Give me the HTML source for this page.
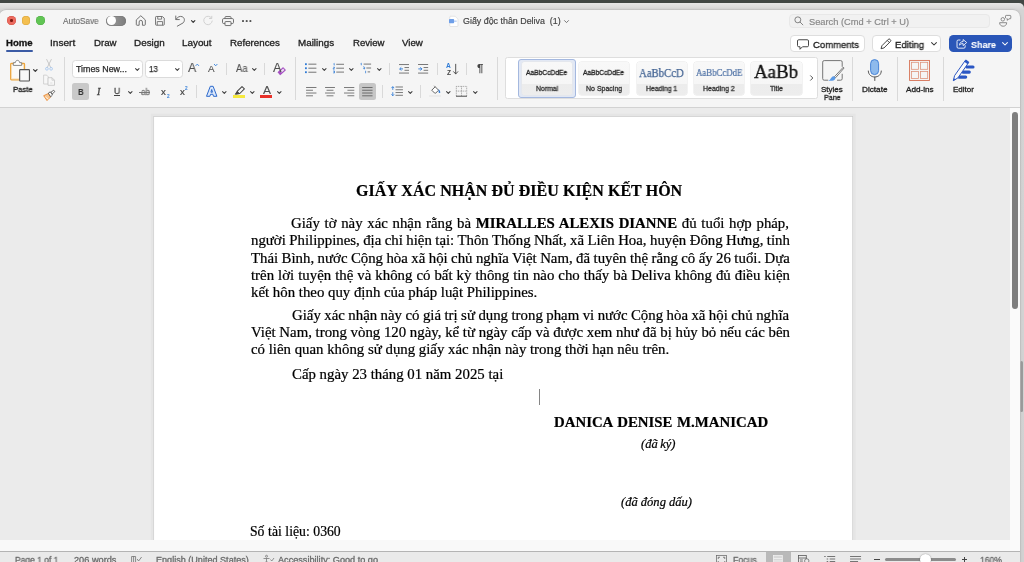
<!DOCTYPE html>
<html lang="vi"><head><meta charset="utf-8"><title>Giấy độc thân Deliva (1)</title>
<style>
html,body{margin:0;padding:0}
html{width:1024px;height:562px;overflow:hidden}
body{width:1024px;height:562px;position:relative;overflow:hidden;background:#d6d6d6;font-family:"Liberation Sans",sans-serif}
.t{position:absolute;white-space:nowrap;display:block;transform-origin:0 50%;will-change:transform}
.a{position:absolute;display:block}
svg{position:absolute;overflow:visible}
.sep{position:absolute;width:1px;background:#d9d9d9}
.chev{fill:none;stroke:#3a3a3a;stroke-width:1.3;stroke-linecap:round;stroke-linejoin:round}
.tile{border-radius:2.500px;background:linear-gradient(#f8f8f8 0,#f6f6f6 66%,#ececec 67%,#ededed 100%);box-shadow:0 0 0 .5px #e6e6e6}

</style></head><body>
<!-- desktop + window behind -->
<div class="a" style="left:0;top:0;width:1024px;height:8px;background:#414744"></div>
<div class="a" style="left:0;top:3.400px;width:1024px;height:559px;background:linear-gradient(#e6e6e6 0,#dcdcdc 4px,#d4d4d4 7px,#d2d2d2 100%);border-radius:0 5px 0 0;"></div>
<div class="a" style="left:1020.300px;top:361px;width:3px;height:51px;background:#9c9c9c;border-radius:1.500px"></div>
<!-- main window -->
<div class="a" id="win" style="left:-1px;top:9.500px;width:1020.500px;height:553px;background:#f5f5f5;border-radius:7px 7px 0 0;box-shadow:0 0 0 .6px #bdbdbd,0 0 3px rgba(0,0,0,.12)">
</div>
<!-- doc area -->
<div class="a" style="left:0;top:107px;width:1020px;height:1px;background:#d2d2d2"></div>
<div class="a" style="left:0;top:108px;width:1010px;height:433px;background:#ebebeb"></div>
<div class="a" style="left:1010px;top:108px;width:10px;height:443px;background:#fafafa"></div>
<div class="a" style="left:1011.800px;top:112.300px;width:5.800px;height:196.500px;background:#7f7f7f;border-radius:3px"></div>
<div class="a" style="left:0;top:551px;width:1020px;height:1px;background:#b4b4b4"></div>
<div class="a" style="left:0;top:552px;width:1020px;height:10px;background:#eaeaea"></div>
<!-- page -->
<svg style="left:0;top:0" width="1024" height="562" viewBox="0 0 1024 562"><rect x="152.200" y="115.100" width="702" height="427" fill="none" stroke="#000" stroke-opacity=".025" stroke-width="3"/><rect x="153.700" y="116.600" width="699" height="424" fill="#fff" stroke="#cbcbcb" stroke-width=".7"/></svg>
<div class="a" style="left:0;top:540px;width:1010px;height:11px;background:#f9f9f9"></div>
<div class="a" style="left:539.100px;top:388.600px;width:1.300px;height:16.600px;background:#858585"></div>
<!-- traffic lights -->
<div class="a" style="left:7.1px;top:16.2px;width:8.8px;height:8.8px;border-radius:50%;background:#ec6a5e;box-shadow:inset 0 0 0 .5px #d35246"></div>
<div class="a" style="left:10.3px;top:19.4px;width:2.4px;height:2.4px;border-radius:50%;background:#7d1a12"></div>
<div class="a" style="left:21.5px;top:16.2px;width:8.8px;height:8.8px;border-radius:50%;background:#f4bf4f;box-shadow:inset 0 0 0 .5px #d9a43b"></div>
<div class="a" style="left:35.9px;top:16.2px;width:8.8px;height:8.8px;border-radius:50%;background:#61c554;box-shadow:inset 0 0 0 .5px #4eab42"></div>
<!-- autosave toggle -->
<div class="a" style="left:105.900px;top:15.600px;width:20.400px;height:10.500px;border-radius:5.300px;background:linear-gradient(90deg,#a2a2a2,#7c7c7c);box-shadow:inset 0 0 0 .6px #777"></div>
<div class="a" style="left:106.700px;top:16.400px;width:8.900px;height:8.900px;border-radius:50%;background:#fff"></div>
<!-- home icon -->
<svg style="left:134.800px;top:14.600px" width="11.600" height="11" viewBox="0 0 23 22"><path d="M2.500 9.800 L11.500 1.500 L20.500 9.800 V19 A1.500 1.500 0 0 1 19 20.500 H14.800 V14 A3.300 3.300 0 0 0 8.200 14 V20.500 H4 A1.500 1.500 0 0 1 2.500 19 Z" fill="none" stroke="#6c6c6c" stroke-width="1.900" stroke-linejoin="round"/></svg>
<!-- save icon -->
<svg style="left:155px;top:15.900px" width="9.800" height="9.700" viewBox="0 0 20 20"><path d="M2.500 1 H15 L19 4.500 V17.500 A1.500 1.500 0 0 1 17.500 19 H2.500 A1.500 1.500 0 0 1 1 17.500 V2.500 A1.500 1.500 0 0 1 2.500 1 Z" fill="none" stroke="#6c6c6c" stroke-width="1.900" stroke-linejoin="round"/><path d="M5.500 1.500 V6.500 H13.500 V1.500" fill="none" stroke="#6c6c6c" stroke-width="1.800"/><path d="M4.500 19 V11.500 H15.500 V19" fill="none" stroke="#6c6c6c" stroke-width="1.800"/></svg>
<!-- undo -->
<svg style="left:174.700px;top:14.700px" width="10.200" height="11.700" viewBox="0 0 20 23"><path d="M1.500 2 V9 H8.500" fill="none" stroke="#6c6c6c" stroke-width="1.900" stroke-linecap="round" stroke-linejoin="round"/><path d="M2 8.500 C5 3.500 10 1.500 14.500 3.500 C19.500 6 19.500 12 16 15.500 L4.500 22" fill="none" stroke="#6c6c6c" stroke-width="1.900" stroke-linecap="round"/></svg>
<svg style="left:191.3px;top:19.8px" width="4.4" height="3" viewBox="0 0 8 5"><path class="chev" d="M1 1 L4 4 L7 1" style="stroke-width:2.2"/></svg>
<!-- redo (disabled) -->
<svg style="left:203.2px;top:15.800px" width="10" height="10" viewBox="0 0 20 20"><path d="M17 4 A8.5 8.5 0 1 0 18.5 10" fill="none" stroke="#d2d2d2" stroke-width="2" stroke-linecap="round"/><path d="M17.5 0.5 V5 H13" fill="none" stroke="#cfcfcf" stroke-width="2" stroke-linecap="round" stroke-linejoin="round"/></svg>
<!-- print -->
<svg style="left:221.600px;top:15.500px" width="12" height="10.100" viewBox="0 0 24 20"><path d="M6 5 V2.500 A1.500 1.500 0 0 1 7.500 1 H16.500 A1.500 1.500 0 0 1 18 2.500 V5" fill="none" stroke="#6c6c6c" stroke-width="1.900"/><rect x="1" y="5" width="22" height="10" rx="2.500" fill="none" stroke="#6c6c6c" stroke-width="1.900"/><rect x="6" y="11" width="12" height="8" rx="1" fill="#f5f5f5" stroke="#6c6c6c" stroke-width="1.900"/></svg>
<!-- dots -->
<div class="a" style="left:242.4px;top:20.1px;width:1.7px;height:1.7px;border-radius:50%;background:#555;box-shadow:3.7px 0 0 #555,7.4px 0 0 #555"></div>
<!-- doc icon -->
<svg style="left:448.9px;top:15.5px" width="9.2" height="10.8" viewBox="0 0 18 21"><path d="M3 0.500 H12 L17.5 6 V19 A1.5 1.5 0 0 1 16 20.500 H3 A1.5 1.500 0 0 1 1.500 19 V2 A1.5 1.5 0 0 1 3 0.500 Z" fill="#fff" stroke="#d0d0d0" stroke-width="1"/><rect x="0" y="6" width="10" height="8" rx="1.5" fill="#6f9fe8"/><rect x="10" y="9" width="5" height="2" fill="#9bbcf0"/></svg>
<svg style="left:563.7px;top:19.6px" width="5" height="3.200" viewBox="0 0 10 6"><path class="chev" d="M1 1 L5 5 L9 1" style="stroke:#666;stroke-width:1.8"/></svg>
<!-- search box -->
<div class="a" style="left:789px;top:13.9px;width:200.7px;height:14.3px;box-sizing:border-box;border:1px solid #e8e8e8;border-radius:4px;background:#f1f1f1"></div>
<svg style="left:793.6px;top:16.2px" width="9.6" height="9.6" viewBox="0 0 20 20"><circle cx="8" cy="8" r="6.2" fill="none" stroke="#7d7d7d" stroke-width="2"/><path d="M12.700 12.700 L18.500 18.500" stroke="#7d7d7d" stroke-width="2" stroke-linecap="round"/></svg>
<!-- tab underline -->
<div class="a" style="left:6px;top:50px;width:26.7px;height:2.3px;border-radius:1.2px;background:#3b5ba5"></div>
<!-- comments / editing / share -->
<div class="a" style="left:790.2px;top:35.300px;width:74.9px;height:16.400px;box-sizing:border-box;border:1px solid #dedede;border-radius:4px;background:#fff"></div>
<svg style="left:796.900px;top:38.800px" width="12" height="11" viewBox="0 0 24 21"><path d="M3.500 1 H20.500 A2.500 2.500 0 0 1 23 3.500 V12.500 A2.500 2.500 0 0 1 20.500 15 H11 L6 20 V15 H3.500 A2.500 2.500 0 0 1 1 12.500 V3.500 A2.500 2.500 0 0 1 3.500 1 Z" fill="none" stroke="#333" stroke-width="1.800" stroke-linejoin="round"/></svg>
<div class="a" style="left:872.4px;top:35.300px;width:69.1px;height:16.400px;box-sizing:border-box;border:1px solid #dedede;border-radius:4px;background:#fff"></div>
<svg style="left:879.800px;top:38px" width="11.800" height="11.800" viewBox="0 0 22 22"><path d="M2 20 L3.500 14.500 L15.500 2.500 A2.200 2.200 0 0 1 18.600 2.500 L19.500 3.400 A2.200 2.200 0 0 1 19.500 6.500 L7.500 18.500 Z" fill="none" stroke="#333" stroke-width="1.700" stroke-linejoin="round"/><path d="M13.500 4.500 L17.500 8.500" stroke="#333" stroke-width="1.700"/></svg>
<svg style="left:930.8px;top:42px" width="6" height="3.600" viewBox="0 0 10 6"><path class="chev" d="M1 1 L5 5 L9 1" style="stroke:#333;stroke-width:1.700"/></svg>
<div class="a" style="left:948.7px;top:35px;width:63.600px;height:17px;border-radius:4.500px;background:#2a56b8"></div>
<svg style="left:955.8px;top:38.400px" width="11.200" height="11.200" viewBox="0 0 22 22"><path d="M8 4 H4.500 A2.500 2.500 0 0 0 2 6.500 V17.500 A2.500 2.500 0 0 0 4.500 20 H15.500 A2.500 2.500 0 0 0 18 17.500 V15" fill="none" stroke="#fff" stroke-width="1.700" stroke-linecap="round"/><path d="M7 14 C7 9.500 10 7 14 7 V3 L21 9 L14 15 V11 C11 11 9 11.500 7 14 Z" fill="none" stroke="#fff" stroke-width="1.700" stroke-linejoin="round"/></svg>
<svg style="left:1001.6px;top:42px" width="6" height="3.600" viewBox="0 0 10 6"><path class="chev" d="M1 1 L5 5 L9 1" style="stroke:#fff;stroke-width:1.700"/></svg>
<!-- ===== ribbon ===== -->
<svg style="left:33.200px;top:68.600px" width="4.600" height="3" viewBox="0 0 8 5"><path class="chev" d="M1 1 L4 4 L7 1" style="stroke-width:2.200"/></svg>
<div class="sep" style="left:64px;top:57px;height:43.500px"></div>
<!-- font boxes -->
<div class="a" style="left:72px;top:60px;width:70.500px;height:18px;box-sizing:border-box;border:1px solid #dbdbdb;border-radius:3.500px;background:#fff"></div>
<svg style="left:135.200px;top:67.600px" width="4.600" height="3" viewBox="0 0 8 5"><path class="chev" d="M1 1 L4 4 L7 1" style="stroke-width:1.750"/></svg>
<div class="a" style="left:144.500px;top:60px;width:38.200px;height:18px;box-sizing:border-box;border:1px solid #dbdbdb;border-radius:3.500px;background:#fff"></div>
<svg style="left:175.200px;top:67.600px" width="4.600" height="3" viewBox="0 0 8 5"><path class="chev" d="M1 1 L4 4 L7 1" style="stroke-width:1.750"/></svg>
<div class="sep" style="left:226px;top:62.500px;height:12.700px"></div>
<svg style="left:252.200px;top:67.600px" width="4.600" height="3" viewBox="0 0 8 5"><path class="chev" d="M1 1 L4 4 L7 1" style="stroke-width:1.750"/></svg>
<div class="sep" style="left:264px;top:62.500px;height:12.700px"></div>
<div class="sep" style="left:295px;top:57.400px;height:43px"></div>
<!-- B selected -->
<div class="a" style="left:72px;top:83.100px;width:16.800px;height:17.100px;border-radius:2.500px;background:#c9c9c9;z-index:0"></div>
<!-- U underline + chevron -->
<div class="a" style="left:114px;top:95.300px;width:6.200px;height:.9px;background:#444"></div>
<svg style="left:128.300px;top:90.500px" width="4.600" height="3" viewBox="0 0 8 5"><path class="chev" d="M1 1 L4 4 L7 1" style="stroke-width:1.750"/></svg>
<!-- strikethrough -->
<div class="a" style="left:139.300px;top:91.600px;width:11.200px;height:.9px;background:#7a7a7a"></div>
<div class="sep" style="left:196.200px;top:85.400px;height:12.400px"></div>
<svg style="left:222.300px;top:90.500px" width="4.600" height="3" viewBox="0 0 8 5"><path class="chev" d="M1 1 L4 4 L7 1" style="stroke-width:1.750"/></svg>
<div class="a" style="left:233px;top:95px;width:12px;height:3px;background:#f6e93e"></div>
<svg style="left:249.700px;top:90.500px" width="4.600" height="3" viewBox="0 0 8 5"><path class="chev" d="M1 1 L4 4 L7 1" style="stroke-width:1.750"/></svg>
<!-- font colour bar -->
<div class="a" style="left:260.300px;top:95px;width:11.800px;height:3px;background:#e8312a"></div>
<svg style="left:277px;top:90.500px" width="4.600" height="3" viewBox="0 0 8 5"><path class="chev" d="M1 1 L4 4 L7 1" style="stroke-width:1.750"/></svg>
<!-- bullets -->
<svg style="left:305.300px;top:63.300px" width="11.400" height="10.400" viewBox="0 0 22 20"><g fill="#2f7bd6"><rect x="0" y="0.500" width="3.500" height="3.500"/><rect x="0" y="8.300" width="3.500" height="3.500"/><rect x="0" y="16" width="3.500" height="3.500"/></g><g stroke="#6a6a6a" stroke-width="1.800"><path d="M6.500 2.200 H22 M6.500 10 H22 M6.500 17.800 H22"/></g></svg>
<svg style="left:322px;top:67.600px" width="4.600" height="3" viewBox="0 0 8 5"><path class="chev" d="M1 1 L4 4 L7 1" style="stroke-width:1.750"/></svg>
<!-- numbering -->
<svg style="left:332.900px;top:63.300px" width="11" height="10.400" viewBox="0 0 22 20"><g stroke="#2f7bd6" stroke-width="1.500" fill="none"><path d="M1 1.500 L2.500 0.500 V4.500 M0.500 8 H3 V10 H0.500 V12 H3 M0.500 15.500 H3 V19.500 H0.500 M1 17.500 H3"/></g><g stroke="#6a6a6a" stroke-width="1.800"><path d="M6.500 2.200 H22 M6.500 10 H22 M6.500 17.800 H22"/></g></svg>
<svg style="left:349.300px;top:67.600px" width="4.600" height="3" viewBox="0 0 8 5"><path class="chev" d="M1 1 L4 4 L7 1" style="stroke-width:1.750"/></svg>
<!-- multilevel -->
<svg style="left:360px;top:63.300px" width="11.200" height="11" viewBox="0 0 22 22"><g stroke="#2f7bd6" stroke-width="1.500" fill="none"><path d="M1 1.500 L2.500 0.500 V4.500 M6 8 C8 7 9 8 9 9.500 V12 M9 10 C6 10 6 12 9 12 M11 15.500 V20.500"/></g><g stroke="#6a6a6a" stroke-width="1.800"><path d="M7 2.200 H22 M12.500 10 H22 M15 17.800 H20"/></g></svg>
<svg style="left:376.700px;top:67.600px" width="4.600" height="3" viewBox="0 0 8 5"><path class="chev" d="M1 1 L4 4 L7 1" style="stroke-width:1.750"/></svg>
<div class="sep" style="left:389px;top:62.500px;height:12.700px"></div>
<!-- decrease indent -->
<svg style="left:399px;top:63.700px" width="10" height="9.600" viewBox="0 0 20 19"><g stroke="#6a6a6a" stroke-width="1.800"><path d="M0 1 H20 M11 7 H20 M11 12.500 H20 M0 18 H20"/></g><path d="M8 9.700 H1.500 M4.500 6.500 L1.300 9.700 L4.500 13" fill="none" stroke="#2f7bd6" stroke-width="1.800" stroke-linejoin="round"/></svg>
<!-- increase indent -->
<svg style="left:417.700px;top:63.700px" width="10.200" height="9.600" viewBox="0 0 20 19"><g stroke="#6a6a6a" stroke-width="1.800"><path d="M0 1 H20 M11 7 H20 M11 12.500 H20 M0 18 H20"/></g><path d="M0.500 9.700 H7.500 M4.500 6.500 L7.700 9.700 L4.500 13" fill="none" stroke="#2f7bd6" stroke-width="1.800" stroke-linejoin="round"/></svg>
<div class="sep" style="left:437px;top:62.500px;height:12.700px"></div>
<!-- sort arrow -->
<svg style="left:452.900px;top:63.900px" width="5.400" height="10.600" viewBox="0 0 10 20"><path d="M5 0.500 V18.500 M1 14.500 L5 18.800 L9 14.500" fill="none" stroke="#444" stroke-width="1.700" stroke-linecap="round" stroke-linejoin="round"/></svg>
<div class="sep" style="left:466px;top:62.500px;height:12.700px"></div>
<!-- alignments -->
<svg style="left:306px;top:86.700px" width="10.500" height="9.400" viewBox="0 0 21 19"><g stroke="#6a6a6a" stroke-width="1.800"><path d="M0 1 H21 M0 6.600 H14 M0 12.200 H21 M0 17.800 H14"/></g></svg>
<svg style="left:325.200px;top:86.700px" width="10" height="9.400" viewBox="0 0 20 19"><g stroke="#6a6a6a" stroke-width="1.800"><path d="M0 1 H20 M3 6.600 H17 M0 12.200 H20 M3 17.800 H17"/></g></svg>
<svg style="left:343.900px;top:86.700px" width="10.300" height="9.400" viewBox="0 0 21 19"><g stroke="#6a6a6a" stroke-width="1.800"><path d="M0 1 H21 M7 6.600 H21 M0 12.200 H21 M7 17.800 H21"/></g></svg>
<div class="a" style="left:359.100px;top:83.200px;width:16.900px;height:17.100px;border-radius:2.500px;background:#c6c6c6"></div>
<svg style="left:362.100px;top:86.700px" width="10.700" height="9.400" viewBox="0 0 21 19"><g stroke="#6a6a6a" stroke-width="2"><path d="M0 1 H21 M0 6.600 H21 M0 12.200 H21 M0 17.800 H21"/></g></svg>
<div class="sep" style="left:382.200px;top:85.400px;height:12.400px"></div>
<!-- line spacing -->
<svg style="left:390.800px;top:86.300px" width="12" height="10.400" viewBox="0 0 24 21"><g stroke="#6a6a6a" stroke-width="1.800"><path d="M9 2 H24 M9 7.600 H24 M9 13.200 H24 M9 18.800 H24"/></g><path d="M3.500 1.500 V8 M0.800 4.200 L3.500 1.200 L6.200 4.200 M3.500 12.500 V19.500 M0.800 16.800 L3.500 19.800 L6.200 16.800" fill="none" stroke="#2f7bd6" stroke-width="1.700" stroke-linejoin="round"/></svg>
<svg style="left:407.500px;top:90.500px" width="4.600" height="3" viewBox="0 0 8 5"><path class="chev" d="M1 1 L4 4 L7 1" style="stroke-width:1.750"/></svg>
<div class="sep" style="left:420px;top:85.400px;height:12.400px"></div>
<!-- shading bucket -->
<svg style="left:430.500px;top:86px" width="9.800" height="8.400" viewBox="0 0 20 17"><path d="M1.500 8.500 L8.500 1.500 L15.500 8.500 L9.500 14.500 A1.500 1.500 0 0 1 7.500 14.500 Z" fill="#fff" stroke="#444" stroke-width="1.700" stroke-linejoin="round"/><path d="M8.500 1.500 L6.500 -0.500" stroke="#444" stroke-width="1.500"/><path d="M15 6 C17 8 19 10.500 19 12.500 A1.700 1.700 0 0 1 15.600 12.500 C15.600 11 16 9.500 15 6 Z" fill="#2f7bd6"/></svg>
<div class="a" style="left:429px;top:95px;width:11.600px;height:2.200px;background:#ececec"></div>
<svg style="left:445.600px;top:90.500px" width="4.600" height="3" viewBox="0 0 8 5"><path class="chev" d="M1 1 L4 4 L7 1" style="stroke-width:1.750"/></svg>
<!-- borders -->
<svg style="left:456.100px;top:86.100px" width="11" height="10.700" viewBox="0 0 22 21"><g stroke="#777" stroke-width="1.200" fill="none" stroke-dasharray="2 1.400"><path d="M0.600 0.600 H21.400 M0.600 0.600 V20 M21.400 0.600 V20 M11 0.600 V20 M0.600 10 H21.400"/></g><path d="M0 20.200 H22" stroke="#333" stroke-width="1.800"/></svg>
<svg style="left:472.600px;top:90.500px" width="4.600" height="3" viewBox="0 0 8 5"><path class="chev" d="M1 1 L4 4 L7 1" style="stroke-width:1.750"/></svg>
<div class="sep" style="left:497px;top:57.400px;height:43px"></div>
<!-- styles gallery -->
<div class="a" style="left:505px;top:57px;width:313px;height:42px;box-sizing:border-box;border:1px solid #dedede;border-radius:2.500px;background:#fff"></div>
<div class="a" style="left:518px;top:59px;width:57.500px;height:39px;box-sizing:border-box;border:1px solid #a4b8df;border-radius:3px;background:#e2e8f4"></div>
<div class="a tile" style="left:522px;top:61.600px;width:49.700px;height:33.200px"></div>
<div class="a tile" style="left:579.100px;top:61.600px;width:50.400px;height:33.200px"></div>
<div class="a tile" style="left:636.500px;top:61.600px;width:50.300px;height:33.200px"></div>
<div class="a tile" style="left:694.300px;top:61.600px;width:49.400px;height:33.200px"></div>
<div class="a tile" style="left:751.200px;top:61.600px;width:50.400px;height:33.200px"></div>
<svg style="left:810.300px;top:74.800px" width="3.400" height="6" viewBox="0 0 6 10"><path d="M1 1 L5 5 L1 9" fill="none" stroke="#444" stroke-width="1.600" stroke-linecap="round" stroke-linejoin="round"/></svg>
<div class="sep" style="left:852px;top:57px;height:43.500px"></div>
<div class="sep" style="left:897px;top:57px;height:43.500px"></div>
<div class="sep" style="left:943px;top:57px;height:43.500px"></div>
<!-- ===== status bar icons ===== -->
<svg style="left:130.500px;top:555.500px" width="11.200" height="8" viewBox="0 0 22 16"><path d="M1 1 H9 V15 H1 Z M5 1 V15" fill="none" stroke="#6a6a6a" stroke-width="1.500"/><path d="M12 6 L15 10 L21 2" fill="none" stroke="#6a6a6a" stroke-width="1.500"/></svg>
<svg style="left:262.500px;top:555.200px" width="11.500" height="9" viewBox="0 0 23 18"><circle cx="7" cy="2.500" r="2" fill="none" stroke="#6a6a6a" stroke-width="1.400"/><path d="M1 7 H13 M7 7 V12 M7 12 L3 18 M7 12 L11 18" fill="none" stroke="#6a6a6a" stroke-width="1.400"/><path d="M15 9 L17.500 12 L22 6" fill="none" stroke="#6a6a6a" stroke-width="1.400"/></svg>
<svg style="left:716px;top:555.400px" width="11" height="9" viewBox="0 0 22 18"><rect x="1" y="1" width="20" height="17" fill="none" stroke="#6a6a6a" stroke-width="1.500"/><path d="M4.500 8 V4.500 H8 M14 4.500 H17.500 V8 M4.500 12 V15 M17.500 12 V15" fill="none" stroke="#555" stroke-width="1.400"/></svg>
<div class="a" style="left:765.500px;top:551.600px;width:25.600px;height:10.400px;background:#b9b9b9"></div>
<svg style="left:773.400px;top:554.800px" width="9.800" height="8" viewBox="0 0 20 16"><rect x="1" y="1" width="18" height="16" fill="#d8d8d8" stroke="#f2f2f2" stroke-width="1.600"/><path d="M1 7 H19 M1 12 H19" stroke="#f2f2f2" stroke-width="1.600"/></svg>
<svg style="left:798.100px;top:554.800px" width="11.700" height="8" viewBox="0 0 24 16"><rect x="1" y="1" width="16" height="16" fill="none" stroke="#555" stroke-width="1.600"/><path d="M1 6 H17 M4 10 H10 M4 14 H10" stroke="#555" stroke-width="1.600"/><circle cx="18" cy="12" r="4.500" fill="#eaeaea" stroke="#555" stroke-width="1.400"/></svg>
<svg style="left:824px;top:556.300px" width="11.400" height="6" viewBox="0 0 22 12"><path d="M0 1 H3 M6 1 H22 M5 6 H8 M11 6 H22 M5 11 H8 M11 11 H22" stroke="#555" stroke-width="1.600"/></svg>
<svg style="left:849.700px;top:556.300px" width="11.100" height="6" viewBox="0 0 22 12"><path d="M0 1 H22 M0 6 H22 M0 11 H16" stroke="#555" stroke-width="1.600"/></svg>
<!-- zoom slider -->
<div class="a" style="left:874.100px;top:558.900px;width:5.600px;height:1.400px;background:#444"></div>
<div class="a" style="left:884.800px;top:558.100px;width:71.300px;height:3.100px;border-radius:1.500px;background:#8c8c8c"></div>
<div class="a" style="left:919.600px;top:554px;width:11.200px;height:11.200px;border-radius:50%;background:#fff;box-shadow:0 0 1.500px rgba(0,0,0,.45)"></div>
<div class="a" style="left:961.700px;top:558.900px;width:5.600px;height:1.400px;background:#444"></div>
<div class="a" style="left:963.800px;top:556.800px;width:1.400px;height:5.600px;background:#444"></div>
<!-- overlay icons in page coordinates -->
<svg id="ov" style="left:0;top:0" width="1024" height="562" viewBox="0 0 1024 562">
<!-- clipboard -->
<rect x="10.700" y="63.500" width="13.800" height="16.300" rx="0.800" fill="#fbfaf7" stroke="#eca53c" stroke-width="1.300"/>
<rect x="11.700" y="64.500" width="11.800" height="14.300" fill="none" stroke="#f9ddb0" stroke-width="0.700"/>
<path d="M13.300 65.400 V62.700 H15.300 C15.600 59.600 19.400 59.600 19.700 62.700 H21.700 V65.400 Z" fill="#fff" stroke="#7a7a7a" stroke-width="0.900" stroke-linejoin="round"/>
<rect x="19.650" y="69.650" width="9.800" height="11.300" rx="0.600" fill="#f9f9f9" stroke="#555" stroke-width="1.150"/>
<!-- scissors -->
<path d="M46.700 59.500 L50.700 67.400 M51.300 59.500 L47.300 67.400" stroke="#bdbdbd" stroke-width="0.800" fill="none" stroke-linecap="round"/>
<circle cx="46.900" cy="68.800" r="1.350" fill="none" stroke="#a9c8ee" stroke-width="0.900"/>
<circle cx="51.100" cy="68.800" r="1.350" fill="none" stroke="#a9c8ee" stroke-width="0.900"/>
<!-- copy -->
<path d="M43.600 75.100 H46.600 L48.300 76.800 V84 H43.600 Z" fill="#f7f7f7" stroke="#c9c9c9" stroke-width="0.800" stroke-linejoin="round"/>
<path d="M48 77.700 H52 L54.500 80.200 V85.300 H48 Z" fill="#f7f7f7" stroke="#c4c4c4" stroke-width="0.800" stroke-linejoin="round"/>
<path d="M52 77.700 V80.200 H54.500" fill="none" stroke="#c4c4c4" stroke-width="0.700"/>
<path d="M50.200 83 H52.400" stroke="#d4d4d4" stroke-width="0.700"/>
<!-- format painter -->
<path d="M43.700 95.700 L48.600 93.400 L50.400 97.200 L47 100.600 Z" fill="#f8c690" stroke="#ea8a34" stroke-width="0.900" stroke-linejoin="round"/>
<path d="M45.300 96.800 L48.500 99.200" stroke="#fff" stroke-width="0.700"/>
<path d="M48.300 93.200 L50.300 91.800 L52.500 95 L50.700 96.800 Z" fill="#fff" stroke="#444" stroke-width="0.800" stroke-linejoin="round"/>
<path d="M51 92.200 L53.700 90.200 L54.800 91.600 L52.300 93.900 Z" fill="#fff" stroke="#444" stroke-width="0.800" stroke-linejoin="round"/>
<!-- add-ins -->
<rect x="909.600" y="60.400" width="19.900" height="20.100" fill="none" stroke="#d4694a" stroke-width="0.850"/>
<g fill="none" stroke="#dc8f76" stroke-width="0.750"><rect x="911.500" y="62.300" width="7" height="7"/><rect x="920.500" y="62.300" width="7.200" height="7"/><rect x="911.500" y="71.400" width="7" height="7.200"/><rect x="920.500" y="71.400" width="7.200" height="7.200"/></g>
<!-- editor -->
<g stroke="#2b57c4" stroke-width="3.100" stroke-linecap="round"><path d="M966.800 67 H973 M963 72.100 H969.300 M959 77.100 H965.700"/></g>
<path d="M953.300 80.700 L954.600 75.600 L965.400 60.300 L968.600 62.600 L957.900 77.900 Z" fill="#fafafa" stroke="#2b57c4" stroke-width="1" stroke-linejoin="round"/>
<path d="M964.300 61.800 L965.900 59.600 L969.300 62 L967.700 64.200 Z" fill="#2b57c4"/>
<path d="M953.100 81 L953.900 78.200 L955.900 79.600 Z" fill="#2b57c4"/>
<!-- styles pane icon -->
<path d="M828.200 80.200 H824.200 A1.500 1.500 0 0 1 822.700 78.700 V62.100 A1.500 1.500 0 0 1 824.200 60.600 H840.700 A1.500 1.500 0 0 1 842.200 62.100 V66.800 M842.200 73.800 V78.700 A1.500 1.500 0 0 1 840.700 80.200 H837" fill="#f9f9f9" fill-opacity="0" stroke="#767676" stroke-width="1"/>
<path d="M843.300 67.200 L834.500 76.700 L835.600 77.700 L844.100 68 Z" fill="#fff" stroke="#555" stroke-width="0.800" stroke-linejoin="round"/>
<path d="M828.200 80.500 C830.500 80 830.800 77.300 832.600 76.400 C834.200 75.700 835.900 77 835.300 78.700 C834.500 80.800 830.500 81.300 828.200 80.500 Z" fill="#5b9ae6"/>
<!-- dictate -->
<rect x="870.600" y="59.600" width="8" height="15" rx="4" fill="#8ebaec" stroke="#3a7bd5" stroke-width="0.900"/>
<path d="M868.300 71 C868.300 79.100 881.300 79.100 881.300 71" fill="none" stroke="#555" stroke-width="1" stroke-linecap="round"/>
<path d="M874.800 77.200 V80.500" stroke="#555" stroke-width="1" stroke-linecap="round"/>
<!-- people icon -->
<g fill="none" stroke="#7a7a7a" stroke-width="0.850" stroke-linejoin="round"><path d="M1005.500 18.200 V16.100 A0.700 0.700 0 0 1 1006.200 15.400 H1010.100 A0.700 0.700 0 0 1 1010.800 16.100 V18.100 A0.700 0.700 0 0 1 1010.100 18.800 H1008.900 L1007.400 20.400 V18.800 H1006.400"/><circle cx="1002.800" cy="19.300" r="1.750"/><path d="M999.600 22.700 H1006.700 C1006.700 27.400 999.600 27.400 999.600 22.700 Z"/></g>
<!-- eraser -->
<g transform="translate(281.700 71.200) rotate(-42)"><rect x="-3.900" y="-2.100" width="7.800" height="4.200" rx="0.500" fill="#a550c2"/><rect x="-1" y="-1" width="3.800" height="2" fill="#efe0f5"/></g>
<!-- highlighter pen -->
<path d="M236.300 93.800 L237.400 91.200 L242 86.600 L244.400 88.900 L239.800 93.500 Z" fill="#f7f7f7" stroke="#444" stroke-width="1.050" stroke-linejoin="round"/>
<path d="M235 94.300 L237.300 91.300 L239.700 93.600 L236.500 94.300 Z" fill="#444" stroke="#444" stroke-width="0.600" stroke-linejoin="round"/>
<!-- text effects A -->
<path d="M206.500 96.300 L210.300 86.300 H213.100 L216.900 96.300 H213.500 L212.900 94.300 H210.500 L209.900 96.300 Z M210.950 92.200 H212.450 L211.700 89.500 Z" fill="#dbe8fb" fill-rule="evenodd" stroke="#2c69cc" stroke-width="1" stroke-linejoin="round"/>
<!-- grow/shrink carets -->
<path d="M195.900 65.600 L197.300 64.100 L198.700 65.600" fill="none" stroke="#3c86dc" stroke-width="0.950" stroke-linecap="round" stroke-linejoin="round"/>
<path d="M214.300 64.300 L215.700 65.800 L217.100 64.300" fill="none" stroke="#3c86dc" stroke-width="0.950" stroke-linecap="round" stroke-linejoin="round"/>
</svg>

<span class="t" style="left:63.30px;top:16px;font:normal normal 8.3px/10px 'Liberation Sans', sans-serif;color:#6a6a6a;transform:scaleX(0.9921);-webkit-text-stroke:0.12px #6a6a6a;">AutoSave</span>
<span class="t" style="left:462.70px;top:16px;font:normal normal 8.8px/10px 'Liberation Sans', sans-serif;color:#444;transform:scaleX(1.0092);-webkit-text-stroke:0.18px #444;">Giấy độc thân Deliva&nbsp; (1)</span>
<span class="t" style="left:808.60px;top:17px;font:normal normal 9.2px/10px 'Liberation Sans', sans-serif;color:#888;transform:scaleX(1.0106);-webkit-text-stroke:0.18px #888;">Search (Cmd + Ctrl + U)</span>
<span class="t" style="left:6.00px;top:38px;font:normal bold 9.3px/10px 'Liberation Sans', sans-serif;color:#151515;transform:scaleX(1.0331);-webkit-text-stroke:0.3px #151515;">Home</span>
<span class="t" style="left:49.80px;top:38px;font:normal normal 9.3px/10px 'Liberation Sans', sans-serif;color:#222;transform:scaleX(1.0831);-webkit-text-stroke:0.3px #222;">Insert</span>
<span class="t" style="left:93.70px;top:38px;font:normal normal 9.3px/10px 'Liberation Sans', sans-serif;color:#222;transform:scaleX(1.0367);-webkit-text-stroke:0.3px #222;">Draw</span>
<span class="t" style="left:133.60px;top:38px;font:normal normal 9.3px/10px 'Liberation Sans', sans-serif;color:#222;transform:scaleX(1.0638);-webkit-text-stroke:0.3px #222;">Design</span>
<span class="t" style="left:182.00px;top:38px;font:normal normal 9.3px/10px 'Liberation Sans', sans-serif;color:#222;transform:scaleX(1.0601);-webkit-text-stroke:0.3px #222;">Layout</span>
<span class="t" style="left:229.70px;top:38px;font:normal normal 9.3px/10px 'Liberation Sans', sans-serif;color:#222;transform:scaleX(1.0474);-webkit-text-stroke:0.3px #222;">References</span>
<span class="t" style="left:298.40px;top:38px;font:normal normal 9.3px/10px 'Liberation Sans', sans-serif;color:#222;transform:scaleX(1.0584);-webkit-text-stroke:0.3px #222;">Mailings</span>
<span class="t" style="left:352.80px;top:38px;font:normal normal 9.3px/10px 'Liberation Sans', sans-serif;color:#222;transform:scaleX(1.0300);-webkit-text-stroke:0.3px #222;">Review</span>
<span class="t" style="left:401.60px;top:38px;font:normal normal 9.3px/10px 'Liberation Sans', sans-serif;color:#222;transform:scaleX(1.0408);-webkit-text-stroke:0.3px #222;">View</span>
<span class="t" style="left:812.90px;top:39px;font:normal normal 9.7px/11px 'Liberation Sans', sans-serif;color:#1c1c1c;transform:scaleX(0.9820);-webkit-text-stroke:0.32px #1c1c1c;">Comments</span>
<span class="t" style="left:895.30px;top:39px;font:normal normal 9.7px/11px 'Liberation Sans', sans-serif;color:#1c1c1c;transform:scaleX(0.9823);-webkit-text-stroke:0.32px #1c1c1c;">Editing</span>
<span class="t" style="left:970.60px;top:39px;font:normal bold 9.7px/11px 'Liberation Sans', sans-serif;color:#fff;transform:scaleX(0.9281);-webkit-text-stroke:0.1px #fff;">Share</span>
<span class="t" style="left:12.50px;top:85px;font:normal normal 8px/9px 'Liberation Sans', sans-serif;color:#222;transform:scaleX(0.9624);-webkit-text-stroke:0.3px #222;">Paste</span>
<span class="t" style="left:76.40px;top:64px;font:normal normal 8.6px/10px 'Liberation Sans', sans-serif;color:#2a2a2a;transform:scaleX(1.0315);-webkit-text-stroke:0.25px #2a2a2a;">Times New...</span>
<span class="t" style="left:148.90px;top:64px;font:normal normal 8.6px/10px 'Liberation Sans', sans-serif;color:#2a2a2a;transform:scaleX(0.9307);-webkit-text-stroke:0.25px #2a2a2a;">13</span>
<span class="t" style="left:77.60px;top:86px;font:normal bold 9.4px/11px 'Liberation Sans', sans-serif;color:#333;transform:scaleX(0.8553);">B</span>
<span class="t" style="left:97.20px;top:86px;font:italic normal 10.2px/11px 'Liberation Serif', serif;color:#444;-webkit-text-stroke:0.3px #444;">I</span>
<span class="t" style="left:114.00px;top:86px;font:normal normal 9.3px/10px 'Liberation Sans', sans-serif;color:#444;transform:scaleX(0.9228);-webkit-text-stroke:0.3px #444;">U</span>
<span class="t" style="left:140.50px;top:87px;font:normal normal 9px/10px 'Liberation Sans', sans-serif;color:#7a7a7a;transform:scaleX(0.8986);-webkit-text-stroke:0.3px #7a7a7a;">ab</span>
<span class="t" style="left:161.20px;top:86px;font:normal normal 9.6px/11px 'Liberation Sans', sans-serif;color:#444;-webkit-text-stroke:0.2px #444;">x</span>
<span class="t" style="left:166.50px;top:94px;font:normal normal 4.6px/5px 'Liberation Sans', sans-serif;color:#2f7bd6;-webkit-text-stroke:0.15px #2f7bd6;">2</span>
<span class="t" style="left:179.60px;top:86px;font:normal normal 9.6px/11px 'Liberation Sans', sans-serif;color:#444;-webkit-text-stroke:0.2px #444;">x</span>
<span class="t" style="left:185.00px;top:86px;font:normal normal 4.6px/5px 'Liberation Sans', sans-serif;color:#2f7bd6;-webkit-text-stroke:0.15px #2f7bd6;">2</span>
<span class="t" style="left:187.90px;top:60px;font:normal normal 12.8px/15px 'Liberation Sans', sans-serif;color:#505050;transform:scaleX(0.9594);-webkit-text-stroke:0.1px #505050;">A</span>
<span class="t" style="left:207.80px;top:63px;font:normal normal 9.8px/11px 'Liberation Sans', sans-serif;color:#505050;transform:scaleX(1.0081);-webkit-text-stroke:0.1px #505050;">A</span>
<span class="t" style="left:235.80px;top:63px;font:normal normal 10px/11px 'Liberation Sans', sans-serif;color:#505050;transform:scaleX(0.9400);-webkit-text-stroke:0.1px #505050;">Aa</span>
<span class="t" style="left:273.30px;top:60px;font:normal normal 12.8px/15px 'Liberation Sans', sans-serif;color:#505050;-webkit-text-stroke:0.1px #505050;">A</span>
<span class="t" style="left:262.70px;top:84px;font:normal normal 11.2px/12px 'Liberation Sans', sans-serif;color:#505050;transform:scaleX(1.0711);-webkit-text-stroke:0.1px #505050;">A</span>
<span class="t" style="left:446.30px;top:62px;font:normal bold 6.6px/7px 'Liberation Sans', sans-serif;color:#2f7bd6;">A</span>
<span class="t" style="left:446.50px;top:69px;font:normal bold 6.6px/7px 'Liberation Sans', sans-serif;color:#444;">Z</span>
<span class="t" style="left:477.40px;top:62px;font:normal bold 11.5px/12px 'Liberation Sans', sans-serif;color:#444;">¶</span>
<span class="t" style="left:526.00px;top:69px;font:normal normal 7.1px/8px 'Liberation Sans', sans-serif;color:#222;transform:scaleX(0.9410);-webkit-text-stroke:0.3px #222;">AaBbCcDdEe</span>
<span class="t" style="left:535.70px;top:85px;font:normal normal 7px/7px 'Liberation Sans', sans-serif;color:#333;transform:scaleX(0.9795);-webkit-text-stroke:0.3px #333;">Normal</span>
<span class="t" style="left:583.40px;top:69px;font:normal normal 7.1px/8px 'Liberation Sans', sans-serif;color:#222;transform:scaleX(0.9365);-webkit-text-stroke:0.3px #222;">AaBbCcDdEe</span>
<span class="t" style="left:586.10px;top:85px;font:normal normal 7px/7px 'Liberation Sans', sans-serif;color:#333;transform:scaleX(0.9972);-webkit-text-stroke:0.3px #333;">No Spacing</span>
<span class="t" style="left:639.20px;top:66px;font:normal normal 12.3px/14px 'Liberation Serif', serif;color:#3f6091;transform:scaleX(0.8744);-webkit-text-stroke:0.25px #3f6091;">AaBbCcD</span>
<span class="t" style="left:645.80px;top:85px;font:normal normal 7px/7px 'Liberation Sans', sans-serif;color:#333;transform:scaleX(0.9774);-webkit-text-stroke:0.3px #333;">Heading 1</span>
<span class="t" style="left:696.20px;top:68px;font:normal normal 9.5px/10px 'Liberation Serif', serif;color:#4a6ea3;transform:scaleX(0.9254);-webkit-text-stroke:0.2px #4a6ea3;">AaBbCcDdE</span>
<span class="t" style="left:702.70px;top:85px;font:normal normal 7px/7px 'Liberation Sans', sans-serif;color:#333;transform:scaleX(0.9930);-webkit-text-stroke:0.3px #333;">Heading 2</span>
<span class="t" style="left:754.00px;top:61px;font:normal normal 19.5px/21px 'Liberation Serif', serif;color:#111;transform:scaleX(0.9692);-webkit-text-stroke:0.35px #111;">AaBb</span>
<span class="t" style="left:770.00px;top:85px;font:normal normal 7px/7px 'Liberation Sans', sans-serif;color:#333;transform:scaleX(0.9947);-webkit-text-stroke:0.3px #333;">Title</span>
<span class="t" style="left:821.10px;top:85px;font:normal normal 7.9px/9px 'Liberation Sans', sans-serif;color:#222;transform:scaleX(1.0140);-webkit-text-stroke:0.3px #222;">Styles</span>
<span class="t" style="left:823.60px;top:93px;font:normal normal 7.9px/9px 'Liberation Sans', sans-serif;color:#222;transform:scaleX(0.9003);-webkit-text-stroke:0.3px #222;">Pane</span>
<span class="t" style="left:862.00px;top:85px;font:normal normal 7.9px/9px 'Liberation Sans', sans-serif;color:#222;transform:scaleX(1.0382);-webkit-text-stroke:0.3px #222;">Dictate</span>
<span class="t" style="left:906.30px;top:85px;font:normal normal 7.9px/9px 'Liberation Sans', sans-serif;color:#222;transform:scaleX(1.0349);-webkit-text-stroke:0.3px #222;">Add-ins</span>
<span class="t" style="left:953.10px;top:85px;font:normal normal 7.9px/9px 'Liberation Sans', sans-serif;color:#222;transform:scaleX(1.0085);-webkit-text-stroke:0.3px #222;">Editor</span>
<span class="t" style="left:15.20px;top:555px;font:normal normal 9px/10px 'Liberation Sans', sans-serif;color:#6a6a6a;transform:scaleX(0.9425);-webkit-text-stroke:0.3px #6a6a6a;">Page 1 of 1</span>
<span class="t" style="left:73.80px;top:555px;font:normal normal 9px/10px 'Liberation Sans', sans-serif;color:#6a6a6a;transform:scaleX(1.0209);-webkit-text-stroke:0.3px #6a6a6a;">206 words</span>
<span class="t" style="left:155.70px;top:555px;font:normal normal 9px/10px 'Liberation Sans', sans-serif;color:#6a6a6a;transform:scaleX(1.0082);-webkit-text-stroke:0.3px #6a6a6a;">English (United States)</span>
<span class="t" style="left:277.50px;top:555px;font:normal normal 9px/10px 'Liberation Sans', sans-serif;color:#6a6a6a;transform:scaleX(1.0146);-webkit-text-stroke:0.3px #6a6a6a;">Accessibility: Good to go</span>
<span class="t" style="left:733.20px;top:555px;font:normal normal 9px/10px 'Liberation Sans', sans-serif;color:#6a6a6a;transform:scaleX(0.9708);-webkit-text-stroke:0.3px #6a6a6a;">Focus</span>
<span class="t" style="left:979.80px;top:555px;font:normal normal 9px/10px 'Liberation Sans', sans-serif;color:#6a6a6a;transform:scaleX(0.9509);-webkit-text-stroke:0.3px #6a6a6a;">160%</span>
<span class="t" style="left:356.20px;top:182px;font:normal bold 15.97px/17px 'Liberation Serif', serif;color:#000;word-spacing:0.258px;transform:translateY(0.40px);-webkit-text-stroke:0.22px #000;">GIẤY XÁC NHẬN ĐỦ ĐIỀU KIỆN KẾT HÔN</span>
<span class="t" style="left:291.40px;top:215px;font:normal normal 14.83px/16px 'Liberation Serif', serif;color:#000;word-spacing:0.982px;transform:translateY(0.40px);-webkit-text-stroke:0.22px #000;">Giấy tờ này xác nhận rằng bà <b>MIRALLES ALEXIS DIANNE</b> đủ tuổi hợp pháp,</span>
<span class="t" style="left:250.50px;top:232px;font:normal normal 14.83px/16px 'Liberation Serif', serif;color:#000;word-spacing:-0.254px;transform:translateY(0.40px);-webkit-text-stroke:0.22px #000;">người Philippines, địa chỉ hiện tại: Thôn Thống Nhất, xã Liên Hoa, huyện Đông Hưng, tỉnh</span>
<span class="t" style="left:250.50px;top:249px;font:normal normal 14.83px/16px 'Liberation Serif', serif;color:#000;word-spacing:-0.273px;transform:translateY(0.50px);-webkit-text-stroke:0.22px #000;">Thái Bình, nước Cộng hòa xã hội chủ nghĩa Việt Nam, đã tuyên thệ rằng cô ấy 26 tuổi. Dựa</span>
<span class="t" style="left:250.50px;top:266px;font:normal normal 14.83px/16px 'Liberation Serif', serif;color:#000;word-spacing:0.316px;transform:translateY(0.50px);-webkit-text-stroke:0.22px #000;">trên lời tuyện thệ và không có bất kỳ thông tin nào cho thấy bà Deliva không đủ điều kiện</span>
<span class="t" style="left:250.50px;top:283px;font:normal normal 14.83px/16px 'Liberation Serif', serif;color:#000;transform:translateY(0.60px);-webkit-text-stroke:0.22px #000;">kết hôn theo quy định của pháp luật Philippines.</span>
<span class="t" style="left:292.30px;top:307px;font:normal normal 14.83px/16px 'Liberation Serif', serif;color:#000;word-spacing:-0.251px;transform:translateY(0.40px);-webkit-text-stroke:0.22px #000;">Giấy xác nhận này có giá trị sử dụng trong phạm vi nước Cộng hòa xã hội chủ nghĩa</span>
<span class="t" style="left:250.50px;top:324px;font:normal normal 14.83px/16px 'Liberation Serif', serif;color:#000;word-spacing:-0.008px;transform:translateY(0.40px);-webkit-text-stroke:0.22px #000;">Việt Nam, trong vòng 120 ngày, kể từ ngày cấp và được xem như đã bị hủy bỏ nếu các bên</span>
<span class="t" style="left:250.50px;top:341px;font:normal normal 14.83px/16px 'Liberation Serif', serif;color:#000;transform:translateY(0.40px);-webkit-text-stroke:0.22px #000;">có liên quan không sử dụng giấy xác nhận này trong thời hạn nêu trên.</span>
<span class="t" style="left:292.00px;top:365px;font:normal normal 14.83px/16px 'Liberation Serif', serif;color:#000;word-spacing:0.005px;transform:translateY(0.50px);-webkit-text-stroke:0.22px #000;">Cấp ngày 23 tháng 01 năm 2025 tại</span>
<span class="t" style="left:553.80px;top:413px;font:normal bold 14.83px/16px 'Liberation Serif', serif;color:#000;word-spacing:0.980px;transform:translateY(0.50px);-webkit-text-stroke:0.22px #000;">DANICA DENISE M.MANICAD</span>
<span class="t" style="left:640.60px;top:436px;font:italic normal 12.55px/14px 'Liberation Serif', serif;color:#000;word-spacing:-0.688px;transform:translateY(0.60px);-webkit-text-stroke:0.22px #000;">(đã ký)</span>
<span class="t" style="left:621.30px;top:494px;font:italic normal 12.55px/14px 'Liberation Serif', serif;color:#000;word-spacing:-0.047px;transform:translateY(0.60px);-webkit-text-stroke:0.22px #000;">(đã đóng dấu)</span>
<span class="t" style="left:249.90px;top:524px;font:normal normal 13.69px/15px 'Liberation Serif', serif;color:#000;word-spacing:0.197px;transform:translateY(0.20px);-webkit-text-stroke:0.22px #000;">Số tài liệu: 0360</span>
</body></html>
